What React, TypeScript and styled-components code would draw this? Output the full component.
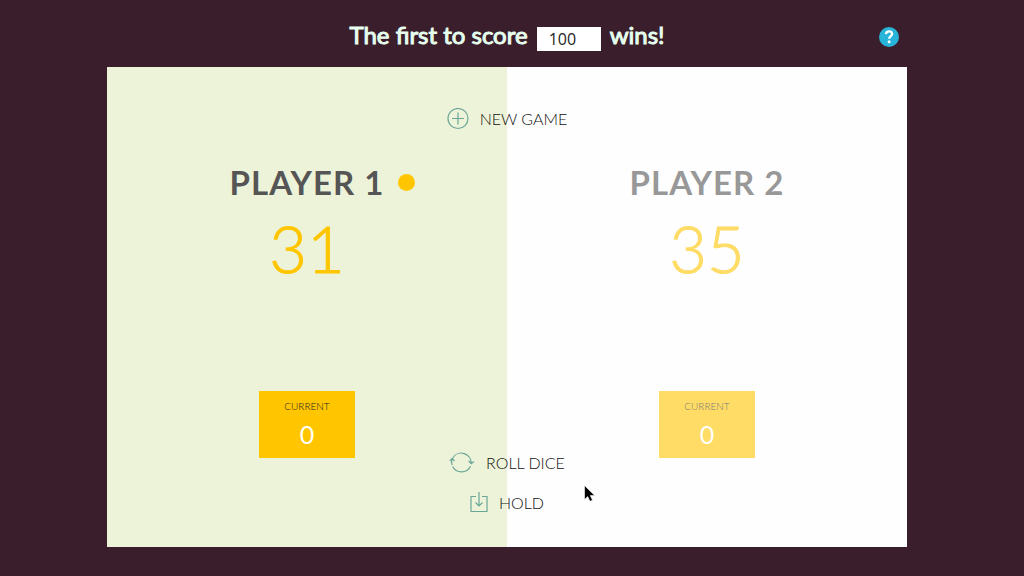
import React, { useState } from 'react';
import styled, { createGlobalStyle } from 'styled-components';

const GlobalStyle = createGlobalStyle`
  * { box-sizing: border-box; }
  body {
    margin: 0;
    background: #3b1e2b;
    color: #555;
    font-family: Lato, "Liberation Sans", sans-serif;
  }
`;

const Page = styled.main`
  max-width: 800px;
  margin: 0 auto;
`;

const Shell = styled.div`
  min-height: 100vh;
  padding: 0 10px 0 0;
`;

const Header = styled.header`
  position: relative;
  display: flex;
  justify-content: center;
  align-items: center;
  height: 67px;
  padding-top: 3px;
`;

const Goal = styled.label`
  display: flex;
  align-items: center;
  gap: 9px;
  color: #e6ffee;
  font-size: 24px;
  font-weight: 400;
  line-height: 32px;
  -webkit-text-stroke: 1px #e6ffee;
`;

const GoalInput = styled.input`
  width: 64px;
  height: 24px;
  margin-top: 8px;
  padding: 0 12px;
  border: 0;
  border-radius: 0;
  background: #fff;
  color: #222;
  font: 400 16px/24px "Open Sans", "Liberation Sans", sans-serif;
  -webkit-text-stroke: 0;
`;

const HelpButton = styled.button`
  position: absolute;
  top: 27px;
  right: 8px;
  display: grid;
  padding: 0;
  border: 0;
  background: none;
  cursor: pointer;
`;

const Board = styled.section`
  position: relative;
  display: grid;
  grid-template-columns: 1fr 1fr;
  min-height: 480px;
`;

const Panel = styled.section<{ $active: boolean; $column: number }>`
  grid-area: 1 / ${(p) => p.$column};
  display: flex;
  flex-direction: column;
  align-items: center;
  padding: 95px 16px 89px;
  background: ${(p) => (p.$active ? '#edf3d8' : '#fefefe')};

  > * { opacity: ${(p) => (p.$active ? 1 : 0.6)}; }
`;

const PlayerName = styled.h2`
  position: relative;
  margin: 0;
  color: #555;
  font-size: 33px;
  font-weight: 700;
  line-height: 40px;
  letter-spacing: 1px;
  text-transform: uppercase;
`;

const ActiveDot = styled.span`
  position: absolute;
  top: 12px;
  left: calc(100% + 14px);
  width: 17px;
  height: 17px;
  border-radius: 50%;
  background: #ffc600;
`;

const Score = styled.output`
  margin-top: 6px;
  color: #ffc600;
  font-size: 65px;
  font-weight: 300;
  line-height: 80px;
  -webkit-text-stroke: 1px #ffc600;
`;

const CurrentBox = styled.div`
  display: flex;
  flex-direction: column;
  align-items: center;
  width: 96px;
  height: 67px;
  margin-top: auto;
  padding-top: 7px;
  background: #ffc600;
`;

const CurrentLabel = styled.span`
  color: #222;
  font-size: 10px;
  font-weight: 300;
  line-height: 16px;
  text-transform: uppercase;
`;

const CurrentValue = styled.output`
  margin-top: 4px;
  color: #fff;
  font-size: 25px;
  font-weight: 400;
  line-height: 32px;
`;

const Controls = styled.nav`
  grid-area: 1 / 1 / 2 / 3;
  justify-self: center;
  display: flex;
  flex-direction: column;
  align-items: center;
  gap: 16px;
  padding: 40px 0 32px;
  z-index: 1;
`;

const ControlButton = styled.button<{ $first?: boolean }>`
  display: flex;
  align-items: center;
  gap: 11px;
  height: 24px;
  margin-bottom: ${(p) => (p.$first ? 'auto' : 0)};
  padding: 0;
  border: 0;
  background: none;
  color: #111;
  font: 300 16px/24px Lato, "Liberation Sans", sans-serif;
  text-transform: uppercase;
  cursor: pointer;
`;

const LineIcon = styled.svg`
  fill: none;
  stroke: #6aa799;
  stroke-width: 1.2;
`;

const Pointer = styled.svg`
  position: absolute;
  top: 418px;
  left: calc(50% + 77px);
  z-index: 2;
  pointer-events: none;
`;

function Player({ name, score, current, active, column }: {
  name: string; score: number; current: number; active: boolean; column: number;
}) {
  return (
    <Panel $active={active} $column={column}>
      <PlayerName>{name}{active && <ActiveDot />}</PlayerName>
      <Score>{score}</Score>
      <CurrentBox>
        <CurrentLabel>Current</CurrentLabel>
        <CurrentValue>{current}</CurrentValue>
      </CurrentBox>
    </Panel>
  );
}

export default function App() {
  const [goal, setGoal] = useState('100');
  return (
    <Shell>
      <GlobalStyle />
      <Page>
        <Header>
          <Goal>
            <span>The first to score</span>
            <GoalInput value={goal} onChange={(e) => setGoal(e.target.value)} />
            <span>wins!</span>
          </Goal>
          <HelpButton aria-label="Help">
            <svg width="20" height="20" viewBox="0 0 20 20">
              <circle cx="10" cy="10" r="10" fill="#27b4d8" />
              <path d="M6.900 7.200C7.100 5.300 8.400 4.400 10.100 4.400C11.900 4.400 13.100 5.400 13.100 7C13.100 9.100 10.200 9.200 10.200 11.700" fill="none" stroke="#fff" strokeWidth="2.4" />
              <circle cx="10.1" cy="14.800" r="1.500" fill="#fff" />
            </svg>
          </HelpButton>
        </Header>
        <Board>
          <Player name="Player 1" score={31} current={0} active column={1} />
          <Player name="Player 2" score={35} current={0} active={false} column={2} />
          <Controls>
            <ControlButton $first>
              <LineIcon width="22" height="22" viewBox="0 0 22 22">
                <circle cx="11" cy="10.500" r="10" />
                <path d="M11 4.500V16.500M5 10.500H17" />
              </LineIcon>
              New game
            </ControlButton>
            <ControlButton>
              <LineIcon width="26" height="24" viewBox="0 0 26 24">
                <path d="M3.100 14A10 10 0 0 1 3.300 7.300M3.800 6.700A10 10 0 0 1 22.200 12.500M.8 9.800L3.300 7.300L5.500 10.200M19.700 10L22.200 12.700L25 10.500" />
                <path d="M21.500 15.200A10 10 0 0 1 3.600 15.500" />
              </LineIcon>
              Roll dice
            </ControlButton>
            <ControlButton>
              <LineIcon width="18" height="22" viewBox="0 0 18 22">
                <path d="M6 4.500H1V19.500H17V4.500H12M9 0V14M5.500 10.500L9 14L12.500 10.500" />
              </LineIcon>
              Hold
            </ControlButton>
          </Controls>
          <Pointer width="12" height="20" viewBox="0 0 12 20">
            <path d="M.5 .5V14.500L3.700 11.600L5.900 16.300L8.500 15.200L6.300 10.600H10.700Z" fill="#000" stroke="#fff" strokeWidth=".6" />
          </Pointer>
        </Board>
      </Page>
    </Shell>
  );
}
